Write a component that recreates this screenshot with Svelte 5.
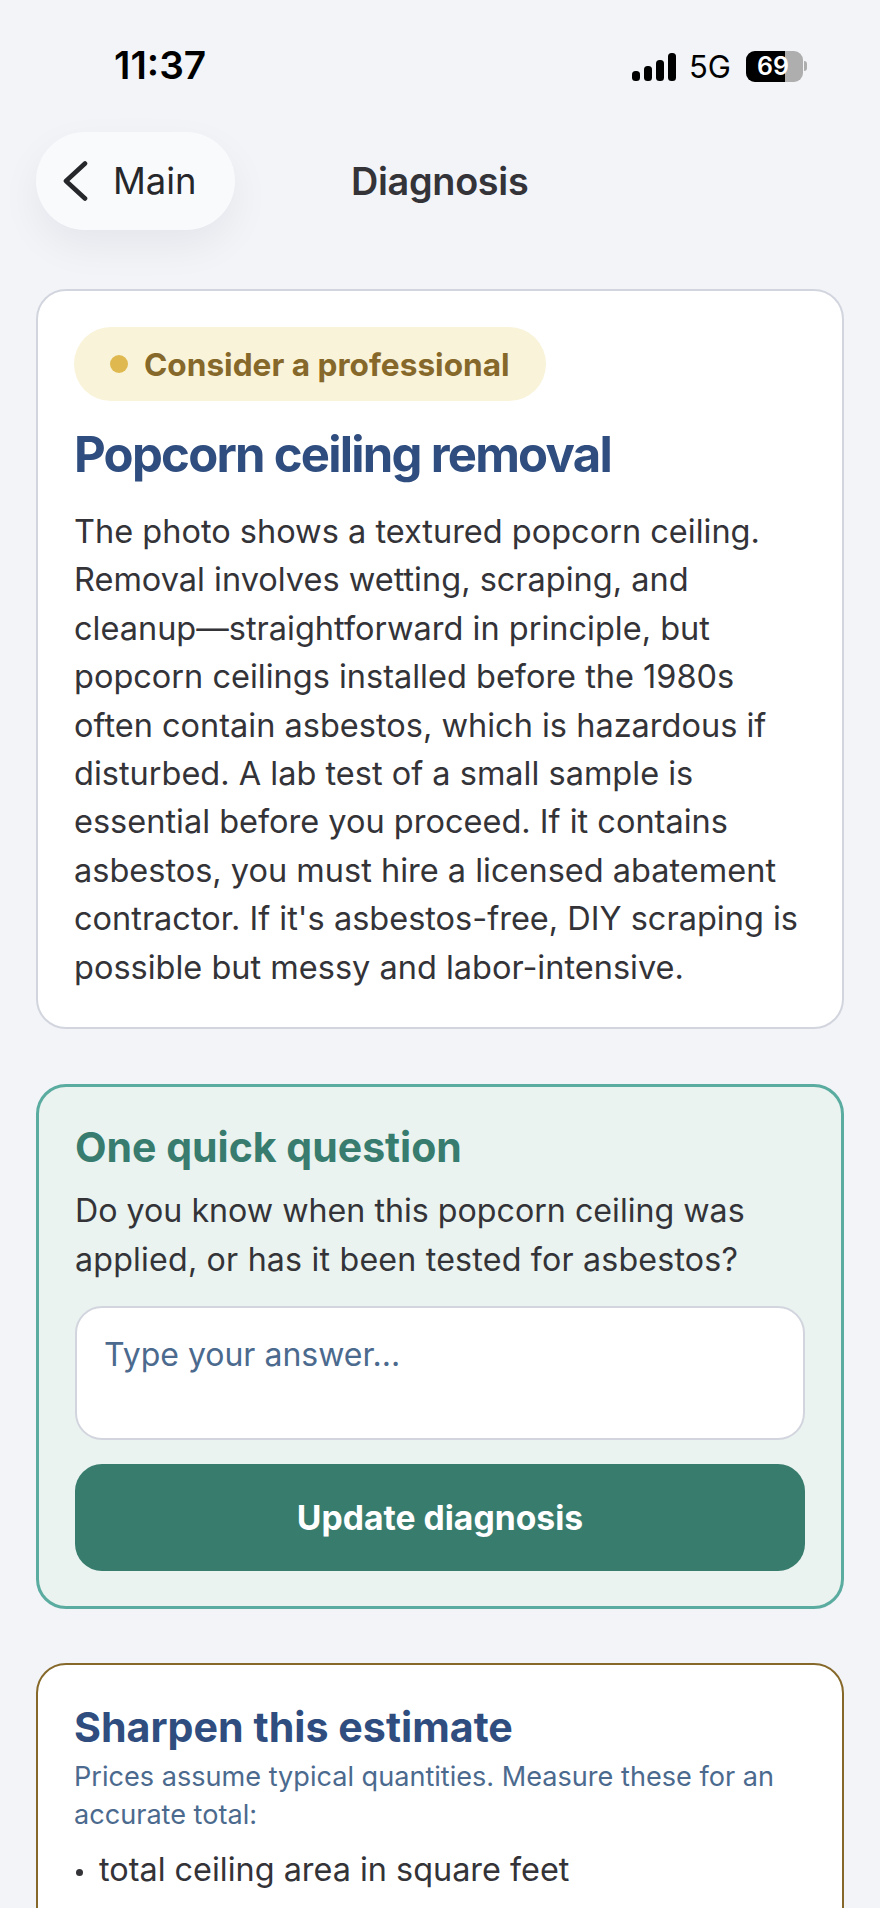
<script>
  const para = [
    'The photo shows a textured popcorn ceiling.',
    'Removal involves wetting, scraping, and',
    'cleanup—straightforward in principle, but',
    'popcorn ceilings installed before the 1980s',
    'often contain asbestos, which is hazardous if',
    'disturbed. A lab test of a small sample is',
    'essential before you proceed. If it contains',
    'asbestos, you must hire a licensed abatement',
    "contractor. If it's asbestos-free, DIY scraping is",
    'possible but messy and labor-intensive.'
  ];
</script>

<div class="page">
  <div class="status">
    <span class="time">11:37</span>
    <div class="indicators">
      <svg class="signal" width="44" height="28" viewBox="0 0 44 28">
        <rect x="0" y="18" width="8" height="10" rx="3.5" fill="#000" />
        <rect x="12" y="13" width="8" height="15" rx="3.5" fill="#000" />
        <rect x="24" y="7" width="8" height="21" rx="3.5" fill="#000" />
        <rect x="36" y="0" width="8" height="28" rx="3.5" fill="#000" />
      </svg>
      <span class="net">5G</span>
      <div class="battery">
        <div class="fill"></div>
        <span class="pct">69</span>
        <span class="nub"></span>
      </div>
    </div>
  </div>

  <header class="nav">
    <div class="back">
      <svg width="26" height="40" viewBox="0 0 26 40" fill="none">
        <path d="M23 2.5 L4 20 L23 37.5" stroke="#26272b" stroke-width="4.6" stroke-linecap="round" stroke-linejoin="round" />
      </svg>
      <span>Main</span>
    </div>
    <div class="title">Diagnosis</div>
  </header>

  <section class="card summary">
    <div class="pill"><i></i><span>Consider a professional</span></div>
    <h1>Popcorn ceiling removal</h1>
    <p class="body">{#each para as l}<span class="ln">{l}</span>{/each}</p>
  </section>

  <section class="card question">
    <h2>One quick question</h2>
    <p class="ask"><span class="ln">Do you know when this popcorn ceiling was</span><span class="ln wide">applied, or has it been tested for asbestos?</span></p>
    <div class="input">Type your answer...</div>
    <button>Update diagnosis</button>
  </section>

  <section class="card sharpen">
    <h2>Sharpen this estimate</h2>
    <p class="note"><span class="ln">Prices assume typical quantities. Measure these for an</span><span class="ln">accurate total:</span></p>
    <div class="item"><span class="dot"></span><span>total ceiling area in square feet</span></div>
  </section>
</div>

<style>
  :global(body) { margin: 0; background: #f2f4f8; }
  .page {
    height: 1908px;
    overflow: hidden;
    background: #f2f4f8;
    font-family: Inter, "Liberation Sans", sans-serif;
    padding: 0 36px;
    box-sizing: border-box;
  }
  .ln { display: block; white-space: nowrap; }
  .wide { letter-spacing: 0.19px; }
  .status {
    height: 132px;
    display: flex;
    justify-content: space-between;
    align-items: flex-start;
    color: #000;
  }
  .time {
    margin: 42px 0 0 78px;
    font-size: 38.8px;
    line-height: 46px;
    font-weight: 600;
  }
  .indicators { display: flex; align-items: center; margin: 51px 0 0 0; padding-right: 41px; }
  .net { font-size: 31px; line-height: 30px; font-weight: 400; margin-left: 13px; }
  .battery {
    position: relative;
    width: 57px;
    height: 31px;
    margin-left: 15px;
    border-radius: 9px;
    background: #aeaeae;
  }
  .fill { position: absolute; left: 0; top: 0; bottom: 0; width: 39px; background: #000; border-radius: 9px 0 0 9px; }
  .pct {
    position: absolute; left: 9px; top: 0; width: 36px;
    color: #fff; font-size: 25px; line-height: 31px; font-weight: 600; text-align: center;
  }
  .nub { position: absolute; right: -4px; top: 10px; width: 3px; height: 10px; background: #aeaeae; border-radius: 0 4px 4px 0; }
  .nav { height: 98px; display: flex; align-items: center; position: relative; }
  .back {
    width: 199px;
    height: 98px;
    border-radius: 49px;
    background: #f9fafc;
    box-shadow: 0 16px 40px rgba(20, 24, 40, 0.06);
    display: flex;
    align-items: center;
    padding-left: 26px;
    gap: 25px;
    box-sizing: border-box;
    font-size: 36.4px;
    font-weight: 400;
    color: #26272b;
  }
  .title {
    margin-left: 116px;
    font-size: 37.8px;
    font-weight: 600;
    color: #333338;
    letter-spacing: -0.3px;
  }
  .card { box-sizing: border-box; width: 808px; border-radius: 30px; }
  .summary {
    margin-top: 59px;
    height: 740px;
    background: #fff;
    border: 2px solid #d2d5de;
    padding: 36px 36px 0 36px;
  }
  .pill {
    display: inline-flex;
    align-items: center;
    height: 74px;
    width: 472px;
    box-sizing: border-box;
    background: #f9f3da;
    border-radius: 37px;
    padding-left: 36px;
    gap: 16px;
    color: #86692a;
    font-size: 31.6px;
    font-weight: 700;
  }
  .pill i { width: 18px; height: 18px; border-radius: 50%; background: #dfb94f; }
  h1 {
    margin: 23px 0 0 0;
    font-size: 49px;
    line-height: 62px;
    font-weight: 700;
    letter-spacing: -1.74px;
    color: #2f4d7e;
  }
  .body {
    margin: 22px 0 0 0;
    font-size: 32.5px;
    line-height: 48.4px;
    color: #333338;
  }
  .question {
    margin-top: 55px;
    height: 525px;
    background: #eaf3ef;
    border: 3px solid #5aaba0;
    padding: 34px 36px 0 36px;
  }
  h2 { margin: 0; font-weight: 700; font-size: 41px; line-height: 52px; }
  .question h2 { color: #377c6e; }
  .ask {
    margin: 14px 0 0 0;
    font-size: 32.2px;
    line-height: 48.5px;
    color: #333338;
  }
  .input {
    margin-top: 22px;
    width: 730px;
    height: 134px;
    box-sizing: border-box;
    background: #fff;
    border: 2px solid #d2d5de;
    border-radius: 27px;
    padding: 26px 0 0 27px;
    font-size: 32px;
    line-height: 42px;
    color: #4b6a8e;
  }
  button {
    display: block;
    margin-top: 24px;
    width: 730px;
    height: 107px;
    border: 0;
    border-radius: 27px;
    background: #387c6e;
    color: #fff;
    font: 700 33.7px Inter, "Liberation Sans", sans-serif;
  }
  .sharpen {
    margin-top: 54px;
    height: 400px;
    background: #fff;
    border: 2px solid #86692a;
    padding: 36px 36px 0 36px;
  }
  .sharpen h2 { color: #2f4d7e; font-size: 41.2px; }
  .note {
    margin: 5px 0 0 0;
    font-size: 27.1px;
    line-height: 38px;
    color: #4b6a8e;
  }
  .item {
    margin-top: 12px;
    display: flex;
    align-items: center;
    font-size: 32.4px;
    line-height: 48px;
    color: #333338;
  }
  .dot { width: 7px; height: 7px; border-radius: 50%; background: #333338; margin: 4px 16px 0 2px; }
</style>
